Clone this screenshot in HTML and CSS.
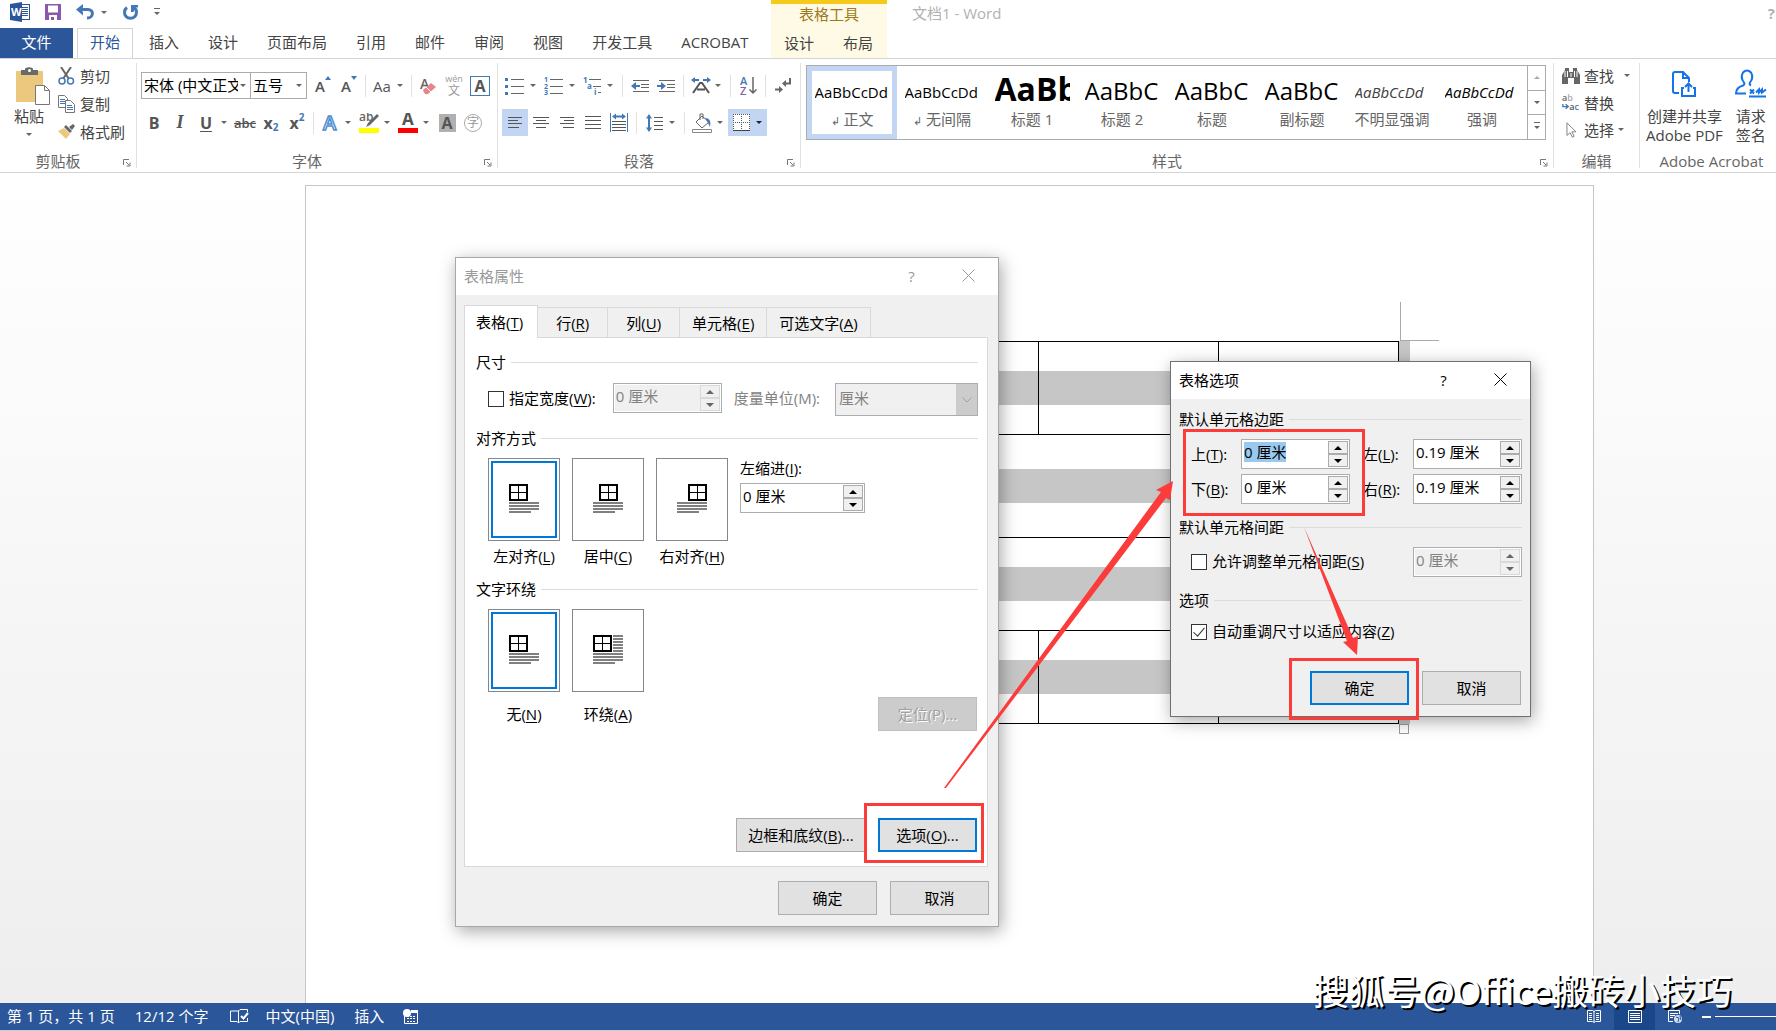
FILE: index.html
```html
<!DOCTYPE html>
<html lang="zh-CN">
<head>
  <meta charset="UTF-8">
  <meta name="viewport" content="width=device-width, initial-scale=1.0">
  <title>文档1 - Word</title>
  <link rel="stylesheet" href="styles.css">
</head>
<body>
  <header class="top">
    <div class="top-left">
      <div class="quick">
        <svg width="20" height="20" viewBox="0 0 20 20"><rect x="10" y="2.500" width="9.500" height="15" fill="#fff" stroke="#2b579a"/><path d="M12 5.500h6M12 7.500h6M12 9.500h6M12 11.500h6M12 13.500h6" stroke="#2b579a"/><path d="M0 2L12 0v20L0 18z" fill="#2b579a"/><text x="1" y="14" font-size="11" font-weight="bold" fill="#fff">W</text></svg>
        <button class="q" aria-label="保存"><svg width="16" height="16" viewBox="0 0 16 16"><path d="M0 0h16v16H0z" fill="#8a58ad"/><path d="M3 1.500h10v7H3zM4 11h8v5H9v-3H6v3H4z" fill="#fff"/></svg></button>
        <button class="q" aria-label="撤消"><svg width="19" height="16" viewBox="0 0 19 16"><path d="M4 5.500h8c6 0 6 8.500-1 8.500" fill="none" stroke="#4478b5" stroke-width="3"/><path d="M0 5.500L7 0v3.500L5 5.500 7 8v3.500z" fill="#4478b5"/></svg><i class="arr"></i></button>
        <button class="q" aria-label="恢复"><svg width="17" height="17" viewBox="0 0 17 17"><path d="M5 3.500A6 6 0 1 0 12 3.500" fill="none" stroke="#4478b5" stroke-width="3"/><path d="M9 1h7v2.500h-3L11.500 8H9z" fill="#4478b5"/></svg></button>
        <button class="q" aria-label="自定义"><svg width="6" height="8" viewBox="0 0 6 8"><path d="M0 .5h6" stroke="#666"/><path d="M0 4h6L3 7z" fill="#666"/></svg></button>
      </div>
      <nav class="tabs">
        <a class="file" href="#">文件</a>
        <a class="tab on" href="#">开始</a>
        <a class="tab" href="#">插入</a>
        <a class="tab" href="#">设计</a>
        <a class="tab" href="#">页面布局</a>
        <a class="tab" href="#">引用</a>
        <a class="tab" href="#">邮件</a>
        <a class="tab" href="#">审阅</a>
        <a class="tab" href="#">视图</a>
        <a class="tab" href="#">开发工具</a>
        <a class="tab" href="#">ACROBAT</a>
      </nav>
    </div>
    <div class="context">
      <div class="context-title">表格工具</div>
      <nav class="tabs"><a class="tab" href="#">设计</a><a class="tab" href="#">布局</a></nav>
    </div>
    <div class="doc-title">文档1 - Word</div>
    <button class="help" aria-label="帮助">?</button>
  </header>

  <div class="ribbon">
    <section class="group clipboard">
      <div class="group-body">
        <button class="paste">
          <svg width="35" height="38" viewBox="0 0 35 38"><path d="M0 4h27v31H0z" fill="#ecc77e"/><path d="M5 3h4V1.500Q13 -1 17 1.500V3h5v5H5z" fill="#6a6a6a"/><circle cx="13.500" cy="3.500" r="1.500" fill="#fff"/><path d="M19.500 18.500h9l5 5v14h-14z" fill="#fff" stroke="#777"/><path d="M28.500 18.500v5h5" fill="none" stroke="#777"/></svg>
          粘贴<i class="arr"></i>
        </button>
        <div class="stack">
          <button><svg width="17" height="18" viewBox="0 0 17 18"><path d="M3 0l8 12M13 0L5 12" stroke="#666" stroke-width="2"/><circle cx="4" cy="14" r="3" fill="#fff" stroke="#4478b5" stroke-width="1.500"/><circle cx="12.500" cy="14" r="3" fill="#fff" stroke="#4478b5" stroke-width="1.500"/></svg>剪切</button>
          <button><svg width="17" height="18" viewBox="0 0 17 18"><path d="M.5 .5h6l3 3v9h-9z" fill="#fff" stroke="#777"/><path d="M2 4.500h5M2 6.500h5M2 8.500h5" stroke="#4478b5"/><path d="M7.500 5.500h5l4 4v8h-9z" fill="#fff" stroke="#777"/><path d="M9 10.500h5M9 12.500h6M9 14.500h6" stroke="#4478b5"/></svg>复制</button>
          <button><svg width="17" height="16" viewBox="0 0 17 16"><path d="M0 7l6-3 6 6-4 5z" fill="#ecc77e"/><path d="M6 3l2-2 6 6-2 2zM11 3l4-3 2 2-3 4z" fill="#666"/></svg>格式刷</button>
        </div>
      </div>
      <div class="group-name">剪贴板<svg class="launch" viewBox="0 0 8 8"><path d="M.5 6V.5H6M3 3l3 3M7 3.500V7H3.500" fill="none" stroke="#777"/></svg></div>
    </section>

    <section class="group font">
      <div class="group-body rows">
        <div class="row">
          <div class="combo face"><input type="text" value="宋体 (中文正文)" aria-label="字体"><i class="arr"></i></div>
          <div class="combo size"><input type="text" value="五号" aria-label="字号"><i class="arr"></i></div>
          <button class="t grow">A<svg width="6" height="4" viewBox="0 0 6 4"><path d="M0 4l3-4 3 4z" fill="#4478b5"/></svg></button>
          <button class="t grow">A<svg width="6" height="4" viewBox="0 0 6 4"><path d="M0 0l3 4 3-4z" fill="#4478b5"/></svg></button>
          <span class="sep"></span>
          <button class="t d">Aa<i class="arr"></i></button>
          <span class="sep"></span>
          <button class="t" aria-label="清除格式"><svg width="17" height="18" viewBox="0 0 17 18"><text x="0" y="12" font-size="14" font-weight="600" fill="#666">A</text><path d="M3 13l8-7 5 4-8 7q-4 1-5-4z" fill="#e8858c"/><path d="M6 10l5 5" stroke="#fff"/></svg></button>
          <button class="t pinyin"><small>wén</small>文</button>
          <button class="t"><span class="boxed">A</span></button>
        </div>
        <div class="row">
          <button class="t b">B</button>
          <button class="t it">I</button>
          <button class="t d b"><u>U</u><i class="arr"></i></button>
          <button class="t strike">abc</button>
          <button class="t b script">x<sub>2</sub></button>
          <button class="t b script">x<sup>2</sup></button>
          <span class="sep"></span>
          <button class="t d" aria-label="文本效果"><svg width="16" height="18" viewBox="0 0 16 18"><text x="1" y="16" font-size="20" fill="#fff" stroke="#4f8fd0" stroke-width="1.500" font-weight="600">A</text></svg><i class="arr"></i></button>
          <button class="t d" aria-label="突出显示"><svg width="20" height="20" viewBox="0 0 20 20"><text x="0" y="8" font-size="12" font-weight="600" fill="#666">ab</text><path d="M18 1l2 2-9 9-4 2 2-4z" fill="#666"/><path d="M0 15h20v5H0z" fill="#ff0"/></svg><i class="arr"></i></button>
          <button class="t d" aria-label="字体颜色"><svg width="20" height="20" viewBox="0 0 20 20"><text x="4" y="12" font-size="17" font-weight="700" fill="#555">A</text><path d="M0 15h20v5H0z" fill="#f00"/></svg><i class="arr"></i></button>
          <button class="t"><span class="shaded">A</span></button>
          <button class="t"><span class="ring">字</span></button>
        </div>
      </div>
      <div class="group-name">字体<svg class="launch" viewBox="0 0 8 8"><path d="M.5 6V.5H6M3 3l3 3M7 3.500V7H3.500" fill="none" stroke="#777"/></svg></div>
    </section>

    <section class="group para">
      <div class="group-body rows">
        <div class="row">
          <button class="t d" aria-label="项目符号"><svg width="19" height="18" viewBox="0 0 19 18"><path d="M0 1h3v3H0zM0 8h3v3H0zM0 15h3v3H0z" fill="#4478b5"/><path d="M6 2.500h13M6 9.500h13M6 16.500h13" stroke="#666"/></svg><i class="arr"></i></button>
          <button class="t d" aria-label="编号"><svg width="19" height="18" viewBox="0 0 19 18"><g font-size="7" font-weight="700" fill="#4478b5"><text x="0" y="5">1</text><text x="0" y="12">2</text><text x="0" y="18">3</text></g><path d="M6 2.500h13M6 9.500h13M6 16.500h13" stroke="#666"/></svg><i class="arr"></i></button>
          <button class="t d" aria-label="多级列表"><svg width="19" height="18" viewBox="0 0 19 18"><g font-size="8" font-weight="700" fill="#4478b5"><text x="0" y="6">1</text><text x="4" y="12">a</text><text x="11" y="18">i</text></g><path d="M6 2.500h12M10 9.500h8M15 15.500h3" stroke="#666"/></svg><i class="arr"></i></button>
          <span class="sep"></span>
          <button class="t" aria-label="减少缩进"><svg width="18" height="12" viewBox="0 0 18 12"><path d="M2 .5h16M10 4.500h8M10 7.500h8M2 11.500h16" stroke="#666"/><path d="M0 6l5-4v3h4v2H5v3z" fill="#4478b5"/></svg></button>
          <button class="t" aria-label="增加缩进"><svg width="18" height="12" viewBox="0 0 18 12"><path d="M2 .5h16M10 4.500h8M10 7.500h8M2 11.500h16" stroke="#666"/><path d="M9 6L4 2v3H0v2h4v3z" fill="#4478b5"/></svg></button>
          <span class="sep"></span>
          <button class="t d" aria-label="中文版式"><svg width="20" height="17" viewBox="0 0 20 17"><path d="M0 3l4-3v2h4v2H4v2zM20 3l-4-3v2h-4v2h4v2z" fill="#4478b5"/><path d="M2 16L9 6h2l7 10M6 12.500h8" fill="none" stroke="#555" stroke-width="2"/></svg><i class="arr"></i></button>
          <span class="sep"></span>
          <button class="t" aria-label="排序"><svg width="17" height="19" viewBox="0 0 17 19"><text x="0" y="9" font-size="11" font-weight="600" fill="#4478b5">A</text><text x="0" y="19" font-size="11" font-weight="600" fill="#8a58ad">Z</text><path d="M13 1v16M9.500 13.500l3.500 3.500 3.500-3.500" fill="none" stroke="#666" stroke-width="1.500"/></svg></button>
          <span class="sep"></span>
          <button class="t" aria-label="显示编辑标记"><svg width="16" height="15" viewBox="0 0 16 15"><path d="M15 0v5.500H9M0 11.500h6" fill="none" stroke="#666" stroke-width="2"/><path d="M7 5.500L11 2v7zM8 11.500L4 8v7z" fill="#666"/></svg></button>
        </div>
        <div class="row">
          <button class="t sel" aria-label="左对齐"><svg width="15" height="12" viewBox="0 0 15 12"><path d="M0 .5h14M0 3.500h10M0 6.500h14M0 10.500h11" stroke="#555"/></svg></button>
          <button class="t" aria-label="居中"><svg width="16" height="12" viewBox="0 0 16 12"><path d="M0 .5h16M3 3.500h10M0 6.500h16M3 10.500h10" stroke="#555"/></svg></button>
          <button class="t" aria-label="右对齐"><svg width="14" height="12" viewBox="0 0 14 12"><path d="M0 .5h14M4 3.500h10M0 6.500h14M3 10.500h11" stroke="#555"/></svg></button>
          <button class="t" aria-label="两端对齐"><svg width="16" height="14" viewBox="0 0 16 14"><path d="M0 .5h16M0 4.500h16M0 8.500h16M0 12.500h16" stroke="#555"/></svg></button>
          <button class="t" aria-label="分散对齐"><svg width="18" height="19" viewBox="0 0 18 19"><path d="M.5 0v19M17.500 0v19" stroke="#4478b5"/><path d="M2 3.500l4-3v2h6v-2l4 3-4 3v-2H6v2z" fill="#4478b5"/><path d="M2 8.500h14M2 11.500h14M2 14.500h14M2 17.500h14" stroke="#555"/></svg></button>
          <span class="sep"></span>
          <button class="t d" aria-label="行距"><svg width="17" height="18" viewBox="0 0 17 18"><path d="M3 0l3 4.500H4v9h2L3 18l-3-4.500h2v-9H0z" fill="#4478b5"/><path d="M8 3.500h9M8 7.500h9M8 11.500h9M8 15.500h9" stroke="#555"/></svg><i class="arr"></i></button>
          <span class="sep"></span>
          <button class="t d" aria-label="底纹"><svg width="20" height="20" viewBox="0 0 20 20"><path d="M10 3l7 6-7 6-6-6zM8 7V1h3v5" fill="none" stroke="#666"/><path d="M13 5q7 0 5 9l-2-4z" fill="#4478b5"/><path d="M.5 16.500h19v3H.5z" fill="#fff" stroke="#888"/></svg><i class="arr"></i></button>
          <button class="t d sel" aria-label="边框"><svg width="17" height="17" viewBox="0 0 17 17"><path d="M0 0h17v17H0z" fill="#fff"/><path d="M0 .5h17M.5 0v17M16.500 0v17M8.500 0v17M0 8.500h17" stroke="#555" stroke-dasharray="1 1"/><path d="M0 16.500h17" stroke="#444"/></svg><i class="arr"></i></button>
        </div>
      </div>
      <div class="group-name">段落<svg class="launch" viewBox="0 0 8 8"><path d="M.5 6V.5H6M3 3l3 3M7 3.500V7H3.500" fill="none" stroke="#777"/></svg></div>
    </section>

    <section class="group styles">
      <div class="gallery">
        <button class="style on"><b>AaBbCcDd</b><span><em>↲</em> 正文</span></button>
        <button class="style"><b>AaBbCcDd</b><span><em>↲</em> 无间隔</span></button>
        <button class="style h1"><b>AaBb</b><span>标题 1</span></button>
        <button class="style h2"><b>AaBbC</b><span>标题 2</span></button>
        <button class="style h2"><b>AaBbC</b><span>标题</span></button>
        <button class="style h2"><b>AaBbC</b><span>副标题</span></button>
        <button class="style italic soft"><b>AaBbCcDd</b><span>不明显强调</span></button>
        <button class="style italic"><b>AaBbCcDd</b><span>强调</span></button>
        <div class="gallery-nav">
          <button class="off" aria-label="上一行"><i class="arr up"></i></button>
          <button aria-label="下一行"><i class="arr"></i></button>
          <button class="more" aria-label="其他"><i class="arr"></i></button>
        </div>
      </div>
      <div class="group-name">样式<svg class="launch" viewBox="0 0 8 8"><path d="M.5 6V.5H6M3 3l3 3M7 3.500V7H3.500" fill="none" stroke="#777"/></svg></div>
    </section>

    <section class="group edit">
      <div class="group-body">
        <div class="stack">
          <button><svg width="18" height="16" viewBox="0 0 18 16"><path d="M0 7L3 2V0h4v4h4V0h4v2l3 5v9h-6v-6H6v6H0z" fill="#666"/><path d="M3 3v6M5.500 3v6M12.500 3v6M15 3v6M9 5v4" stroke="#fff"/></svg>查找<i class="arr far"></i></button>
          <button><svg width="20" height="18" viewBox="0 0 20 18"><text x="0" y="7" font-size="10" font-weight="600" fill="#666">a<tspan fill="#aaa">b</tspan></text><text x="8" y="17" font-size="10" font-weight="600" fill="#555">a<tspan fill="#4478b5">c</tspan></text><path d="M1 10v3h5M4 10.500L7 13l-3 2.500" fill="none" stroke="#4478b5" stroke-width="1.500"/></svg>替换</button>
          <button><svg width="20" height="18" viewBox="0 0 20 18"><path d="M5.500 1v14l3.500-3 2.500 5 2-1-2.500-5h4.500z" fill="#fff" stroke="#777"/></svg>选择<i class="arr"></i></button>
        </div>
      </div>
      <div class="group-name">编辑</div>
    </section>

    <section class="group acrobat">
      <div class="group-body">
        <button><svg width="24" height="26" viewBox="0 0 24 26" fill="none" stroke="#1473e6" stroke-width="2"><path d="M7 22H3q-2 0-2-2V3q0-2 2-2h8l6 6v4M11 1v6h6M12 17h-2v8h13v-8h-2M16.500 21v-8M13 16l3.500-3.500L20 16"/></svg><span>创建并共享</span><span>Adobe PDF</span></button>
        <button><svg width="32" height="29" viewBox="0 0 32 29" fill="none" stroke="#1473e6" stroke-width="2"><path d="M11 24H1q0-6 7-8 2-1 1-3-4-5-1-10 4-4 8 0 3 5-1 10-1 2 1 3M14 27h17M15 20l4 4M19 20l-4 4M21 23l3-3v3l3-3v3l4-3"/></svg><span>请求</span><span>签名</span></button>
      </div>
      <div class="group-name">Adobe Acrobat</div>
    </section>
  </div>

  <main class="work">
    <div class="page">
      <div class="crop"></div>
      <table class="doc">
        <tr><td><div></div></td><td><div></div></td><td><div></div></td><td><div></div></td><td><div></div></td></tr>
        <tr class="tall"><td><div></div></td><td><div></div></td><td colspan="2"><div></div></td><td><div></div></td></tr>
        <tr><td><div></div></td><td><div></div></td><td colspan="2"><div></div></td><td><div></div></td></tr>
        <tr><td><div></div></td><td><div></div></td><td><div></div></td><td><div></div></td><td><div></div></td></tr>
      </table>
      <div class="row-end"><div class="handle"></div></div>
    </div>

    <form class="dialog props">
      <div class="bar"><h2>表格属性</h2><button type="button">?</button><button type="button" aria-label="关闭"><svg width="13" height="13" viewBox="0 0 13 13"><path d="M.5 .5l12 12M12.500 .5l-12 12" stroke="currentColor"/></svg></button></div>
      <div class="sheet-tabs">
        <button type="button" class="on">表格(<u>T</u>)</button>
        <button type="button">行(<u>R</u>)</button>
        <button type="button">列(<u>U</u>)</button>
        <button type="button">单元格(<u>E</u>)</button>
        <button type="button">可选文字(<u>A</u>)</button>
      </div>
      <div class="sheet">
        <div class="legend">尺寸</div>
        <div class="line size-line">
          <input type="checkbox" id="w"><label for="w">指定宽度(<u>W</u>):</label>
          <div class="spin off"><input type="text" value="0 厘米" disabled aria-label="宽度"><div><button type="button" disabled><i></i></button><button type="button" disabled><i></i></button></div></div>
          <label for="unit" class="gray">度量单位(M):</label>
          <div class="pick"><select id="unit" disabled><option>厘米</option></select><svg width="10" height="6" viewBox="0 0 10 6"><path d="M.5 .5L5 5 9.500 .5" fill="none" stroke="#a0a0a0"/></svg></div>
        </div>
        <div class="legend">对齐方式</div>
        <div class="tiles">
          <button type="button" class="on"><span><svg width="30" height="30" viewBox="0 0 30 30"><path d="M1 1h17v15H1z" fill="#fff" stroke="#000" stroke-width="2"/><path d="M9.500 1v15M1 8.500h17" stroke="#000"/><path d="M0 19h30M0 22h30M0 25h30M0 28h22" stroke="#808080" stroke-width="2"/></svg></span>左对齐(<u>L</u>)</button>
          <button type="button"><span><svg width="30" height="30" viewBox="0 0 30 30"><path d="M7 1h17v15H7z" fill="#fff" stroke="#000" stroke-width="2"/><path d="M15.500 1v15M7 8.500h17" stroke="#000"/><path d="M0 19h30M0 22h30M0 25h30M0 28h22" stroke="#808080" stroke-width="2"/></svg></span>居中(<u>C</u>)</button>
          <button type="button"><span><svg width="30" height="30" viewBox="0 0 30 30"><path d="M12 1h17v15H12z" fill="#fff" stroke="#000" stroke-width="2"/><path d="M20.500 1v15M12 8.500h17" stroke="#000"/><path d="M0 19h30M0 22h30M0 25h30M0 28h22" stroke="#808080" stroke-width="2"/></svg></span>右对齐(<u>H</u>)</button>
          <div class="indent">
            <label for="indent">左缩进(<u>I</u>):</label>
            <div class="spin"><input type="text" id="indent" value="0 厘米"><div><button type="button"><i></i></button><button type="button"><i></i></button></div></div>
          </div>
        </div>
        <div class="legend">文字环绕</div>
        <div class="tiles wrap">
          <button type="button" class="on"><span><svg width="30" height="30" viewBox="0 0 30 30"><path d="M1 1h17v15H1z" fill="#fff" stroke="#000" stroke-width="2"/><path d="M9.500 1v15M1 8.500h17" stroke="#000"/><path d="M0 19h30M0 22h30M0 25h30M0 28h22" stroke="#808080" stroke-width="2"/></svg></span>无(<u>N</u>)</button>
          <button type="button"><span><svg width="30" height="30" viewBox="0 0 30 30"><path d="M1 1h17v15H1z" fill="#fff" stroke="#000" stroke-width="2"/><path d="M9.500 1v15M1 8.500h17" stroke="#000"/><path d="M20 1h10M20 4h10M20 7h10M20 10h10M20 13h10M20 16h10M0 19h30M0 22h30M0 25h30M0 28h22" stroke="#808080" stroke-width="2"/></svg></span>环绕(<u>A</u>)</button>
          <input type="button" class="btn" value="定位(P)..." disabled>
        </div>
        <div class="sheet-foot">
          <button type="button" class="btn wide">边框和底纹(<u>B</u>)...</button>
          <button type="button" class="btn focus">选项(<u>O</u>)...</button>
        </div>
      </div>
      <div class="foot"><button type="button" class="btn">确定</button><button type="button" class="btn">取消</button></div>
    </form>

    <form class="dialog opts">
      <div class="bar"><h2>表格选项</h2><button type="button">?</button><button type="button" aria-label="关闭"><svg width="13" height="13" viewBox="0 0 13 13"><path d="M.5 .5l12 12M12.500 .5l-12 12" stroke="currentColor"/></svg></button></div>
      <div class="legend">默认单元格边距</div>
      <div class="margins">
        <label for="mt">上(<u>T</u>):</label>
        <div class="spin"><input type="text" id="mt" value="0 厘米"><div><button type="button"><i></i></button><button type="button"><i></i></button></div></div>
        <label for="ml">左(<u>L</u>):</label>
        <div class="spin"><input type="text" id="ml" value="0.19 厘米"><div><button type="button"><i></i></button><button type="button"><i></i></button></div></div>
        <label for="mb">下(<u>B</u>):</label>
        <div class="spin"><input type="text" id="mb" value="0 厘米"><div><button type="button"><i></i></button><button type="button"><i></i></button></div></div>
        <label for="mr">右(<u>R</u>):</label>
        <div class="spin"><input type="text" id="mr" value="0.19 厘米"><div><button type="button"><i></i></button><button type="button"><i></i></button></div></div>
      </div>
      <div class="legend">默认单元格间距</div>
      <div class="line spacing">
        <input type="checkbox" id="sp"><label for="sp">允许调整单元格间距(<u>S</u>)</label>
        <div class="spin off"><input type="text" value="0 厘米" disabled aria-label="间距"><div><button type="button" disabled><i></i></button><button type="button" disabled><i></i></button></div></div>
      </div>
      <div class="legend">选项</div>
      <div class="line auto"><input type="checkbox" id="fit" checked><label for="fit">自动重调尺寸以适应内容(<u>Z</u>)</label></div>
      <div class="foot"><button type="button" class="btn focus">确定</button><button type="button" class="btn">取消</button></div>
    </form>

    <!-- red boxes and arrows over the dialogs -->
    <svg class="marks" width="600" height="500" viewBox="830 400 600 500">
      <g fill="none" stroke="#fc3b3b" stroke-width="3">
        <rect x="865.500" y="804.500" width="117" height="57"/>
        <rect x="1184.500" y="430.500" width="179" height="84"/>
        <rect x="1290.500" y="659.500" width="127" height="59"/>
      </g>
      <path d="M944 788L1161 492 1156 490 1173 481 1170 500 1166 498 946 788z" fill="#fc3b3b"/>
      <path d="M1304 527L1353 638 1358 636 1357 655 1343 642 1347 641z" fill="#fc3b3b"/>
    </svg>
  </main>

  <footer class="status">
    <span class="pages">第 1 页，共 1 页</span>
    <span class="words">12/12 个字</span>
    <svg width="19" height="15" viewBox="0 0 19 15"><path d="M8.500 2v12M8.500 2H.5v10.500H7l1.500 1.500 1.500-1.500h7.500V9M8.500 2l1.500-1.500h7.500V3" fill="none" stroke="#fff"/><path d="M11 7l2.500 2.500L18 4" fill="none" stroke="#fff" stroke-width="2"/></svg>
    <span class="lang">中文(中国)</span>
    <span class="mode">插入</span>
    <svg width="15" height="15" viewBox="0 0 15 15"><path d="M8 1h7v3H8z" fill="#fff"/><path d="M1.500 7v7.500h13V4" fill="none" stroke="#fff"/><circle cx="4" cy="4" r="4" fill="#fff"/><path d="M4 7.500h9M4 9.500h9M4 12.500h9" stroke="#fff" stroke-dasharray="2 1"/></svg>
    <div class="views">
      <button aria-label="阅读视图"><svg width="14" height="13" viewBox="0 0 14 13"><path d="M.5 .5h5l1.500 1 1.500-1h5v11h-5l-1.500 1-1.500-1h-5zM7 1v11M2 3.500h3M2 5.500h3M2 7.500h3M2 9.500h3M9 3.500h3M9 5.500h3M9 7.500h3M9 9.500h3" fill="none" stroke="#fff"/></svg></button>
      <button class="on" aria-label="页面视图"><svg width="14" height="13" viewBox="0 0 14 13"><path d="M.5 .5h13v12H.5zM2 3.500h10M2 5.500h10M2 7.500h10M2 9.500h10" fill="none" stroke="#fff"/></svg></button>
      <button aria-label="Web 版式"><svg width="15" height="14" viewBox="0 0 15 14"><path d="M5 11.500H.5V.5h11V4M2 3.500h8M2 5.500h5M2 7.500h3" fill="none" stroke="#fff"/><circle cx="10" cy="9" r="4" fill="#cfdcf0"/><path d="M8 7l3 1-1 4M12 6l1 4" stroke="#2b579a" fill="none"/></svg></button>
      <span class="minus"></span><span class="track"></span>
    </div>
    <div class="watermark">搜狐号@Office搬砖小技巧</div>
  </footer>

  <script>
    // the top margin field opens with its value selected
    document.getElementById('mt').select();
  </script>
</body>
</html>
```
FILE: styles.css
```css
* { box-sizing: border-box; }
body {
  margin: 0;
  min-height: 100vh;
  display: flex;
  flex-direction: column;
  background: #fff;
  color: #444;
  font: 15px/20px "Open Sans", "Noto Sans CJK SC", sans-serif;
  overflow: hidden;
}
button, input, select { font: inherit; color: inherit; margin: 0; }
button { background: none; border: 0; padding: 0; white-space: nowrap; }
a { color: inherit; text-decoration: none; }
u { text-underline-offset: 2px; }
svg { flex: none; }
.arr {
  flex: none;
  border: 3px solid transparent;
  border-top-color: #666;
  border-bottom: 0;
}
.arr.up { border-top: 0; border-bottom: 3px solid #aaa; }

/* title bar and tabs */
.top {
  display: flex;
  height: 59px;
  border-bottom: 1px solid #d4d4d4;
}
.top-left { width: 771px; display: flex; flex-direction: column; }
.quick {
  height: 29px;
  padding: 0 10px 4px;
  display: flex;
  align-items: center;
  gap: 15px;
}
.q { display: flex; align-items: center; gap: 6px; }
.tabs { display: flex; height: 30px; }
.tab, .file { height: 29px; line-height: 26px; white-space: nowrap; }
.file { width: 73px; height: 30px; line-height: 28px; background: #2b579a; color: #fff; text-align: center; margin-right: 4px; }
.tab { padding: 0 12px; border: 1px solid transparent; border-bottom: 0; margin-right: 3px; }
.tab.on { height: 30px; color: #2b579a; background: #fff; border-color: #d4d4d4; }
.context { width: 116px; background: #fffae6; border-top: 4px solid #f5ca1b; }
.context-title { height: 25px; line-height: 20px; text-align: center; color: #9b7a1a; }
.context .tabs { height: 29px; }
.doc-title { flex: 1; padding: 3px 25px; color: #b1b1b1; }
.help { color: #b1b1b1; font-weight: bold; align-self: flex-start; padding: 3px 1px; }

/* ribbon */
.ribbon {
  display: flex;
  height: 114px;
  padding-top: 4px;
  border-bottom: 1px solid #d4d4d4;
  overflow: hidden;
}
.group {
  flex: none;
  display: flex;
  flex-direction: column;
  height: 105px;
  border-right: 1px solid #e1e1e1;
}
.group-body { flex: none; height: 88px; display: flex; }
.rows { flex-direction: column; padding: 4px; }
.group-name { position: relative; height: 17px; padding-right: 20px; text-align: center; color: #666; white-space: nowrap; }
.launch { position: absolute; right: 5px; top: 8px; width: 8px; height: 8px; }
.clipboard { width: 137px; }
.font { width: 361px; }
.para { width: 303px; }
.styles { width: 753px; }
.edit { width: 86px; }
.edit .group-name { padding: 0; }
.acrobat { border: 0; }
.paste {
  width: 58px;
  padding-top: 4px;
  display: flex;
  flex-direction: column;
  align-items: center;
  line-height: 22px;
}
.paste svg { margin: 0 0 0 8px; }
.paste .arr { margin-top: 6px; }
.stack { display: flex; flex-direction: column; }
.stack button { height: 28px; display: flex; align-items: center; gap: 5px; padding-bottom: 2px; }
.row { display: flex; align-items: center; height: 37px; }
.combo {
  display: flex;
  align-items: center;
  height: 27px;
  border: 1px solid #ababab;
  padding-right: 4px;
  color: #000;
}
.combo input { width: 100%; min-width: 0; border: 0; padding: 0 2px 2px; outline: 0; background: none; }
.face { width: 110px; }
.size { width: 57px; margin-left: -1px; }
.size + .t { margin-left: 3px; }
.t { width: 26px; height: 27px; display: flex; align-items: center; justify-content: center; color: #555; }
.t.d { width: 39px; position: relative; padding-right: 13px; }
.t.d .arr { position: absolute; right: 5px; top: 12px; }
.t.sel { background: #c2d5f2; }
.t.sel .arr { border-top-color: #222; }
.t.b { font-weight: bold; font-size: 16px; }
.t.it { font: italic bold 18px "Liberation Serif", serif; }
.t.grow { font-weight: 600; align-items: center; }
.t.grow svg { align-self: flex-start; margin-top: 4px; }
.t.strike { font-size: 13px; font-weight: 600; text-decoration: line-through; }
.script sub, .script sup { font-size: 10px; line-height: 10px; color: #4478b5; }
.script sub { align-self: flex-end; margin-bottom: 4px; }
.script sup { align-self: flex-start; margin-top: 3px; }
.pinyin { flex-direction: column; font-size: 12px; line-height: 14px; color: #999; }
.pinyin small { font-size: 9px; line-height: 10px; }
.boxed, .shaded, .ring { width: 20px; height: 20px; line-height: 18px; font-weight: bold; font-size: 16px; }
.boxed { border: 1px solid #4478b5; }
.shaded { width: 17px; height: 18px; background: #b0b0b0; }
.ring { border: 1px solid #b0a8ac; border-radius: 50%; width: 18px; height: 18px; line-height: 16px; font-size: 12px; font-weight: normal; color: #999; }
.sep { width: 1px; height: 22px; background: #e1e1e1; margin: 0 3px; }
.para .sep { margin: 0 4px; }

.gallery { flex: none; display: flex; margin: 2px 7px 11px 5px; height: 75px; border: 1px solid #ababab; }
.style {
  flex: none;
  width: 90px;
  display: flex;
  flex-direction: column;
  align-items: center;
  padding: 7px 0 0;
  color: #666;
}
.style.on { border: 5px solid #c2d5f2; padding: 2px 0 0; }
.style b { flex: none; width: 75px; height: 36px; line-height: 38px; overflow: hidden; font-weight: normal; color: #000; text-align: left; }
.style em { font-size: 11px; font-style: normal; }
.style.h1 b { font-size: 32px; font-weight: bold; line-height: 32px; }
.style.h2 b { font-size: 24px; line-height: 36px; }
.style.italic b { font-style: italic; }
.style.soft b { color: #404040; }
.gallery-nav { flex: 1; display: flex; flex-direction: column; border-left: 1px solid #ababab; }
.gallery-nav button { flex: 1; display: flex; justify-content: center; align-items: center; border-bottom: 1px solid #ababab; }
.gallery-nav button:last-child { border: 0; }
.more .arr { position: relative; }
.more .arr::before { content: ""; position: absolute; left: -3px; top: -7px; width: 6px; height: 1px; background: #666; }

.edit .stack { padding: 0 8px; }
.edit .stack button { height: 27px; gap: 4px; }
.edit .stack svg { width: 18px; }
.edit .far { margin-left: 6px; }
.acrobat .group-body { gap: 12px; padding: 6px 6px 0; }
.acrobat button { display: flex; flex-direction: column; align-items: center; line-height: 19px; }
.acrobat svg { height: 30px; margin-bottom: 8px; }
.acrobat .group-name { padding: 0 0 0 10px; }

/* document */
.work { flex: 1; position: relative; display: flex; background: linear-gradient(#fff, #eee); overflow: hidden; }
.page {
  flex: 1;
  position: relative;
  display: flex;
  align-items: flex-start;
  margin: 12px 182px 0 305px;
  padding: 155px 0 0 193px;
  background: #fff;
  border: 1px solid #c6c6c6;
  border-bottom: 0;
}
.doc { width: 900px; table-layout: fixed; border-collapse: collapse; }
.doc tr { height: 93px; }
.doc .tall { height: 103px; }
.doc td { border: 1px solid #000; padding: 0; }
.doc td div { height: 34px; background: #c6c6c6; }
.row-end { width: 11px; height: 383px; background: #c6c6c6; position: relative; }
.handle { position: absolute; top: 383px; left: 0; width: 10px; height: 10px; border: 1px solid #999; background: #fff; }
.crop { position: absolute; left: 1094px; top: 116px; width: 39px; height: 39px; border: solid #aaa; border-width: 0 0 1px 1px; }

/* dialogs */
.dialog {
  position: absolute;
  background: #f0f0f0;
  color: #000;
  box-shadow: 2px 4px 16px rgba(0,0,0,0.35);
}
.props { left: 455px; top: 84px; width: 544px; border: 1px solid #a8a8a8; }
.opts { left: 1170px; top: 188px; width: 361px; border: 1px solid #707070; }
.bar { height: 37px; display: flex; align-items: center; background: #fff; padding: 0 1px 2px 8px; }
.bar h2 { flex: 1; margin: 0; font-size: 15px; font-weight: normal; }
.bar button { width: 57px; display: flex; justify-content: center; }
.props .bar { color: #999; }
.legend { display: flex; align-items: center; gap: 5px; height: 20px; white-space: nowrap; }
.legend::after { content: ""; flex: 1; height: 1px; background: #dcdcdc; }
.line { display: flex; align-items: center; white-space: nowrap; }
.line label { padding-bottom: 2px; }
.gray { color: #838383; }
input[type=checkbox] {
  appearance: none;
  width: 16px;
  height: 16px;
  border: 1px solid #333;
  background: #fff;
  margin-right: 5px;
  display: flex;
  justify-content: center;
}
input[type=checkbox]:checked::after {
  content: "";
  width: 5px;
  height: 10px;
  border: solid #333;
  border-width: 0 1px 1px 0;
  transform: rotate(40deg);
}
.spin { display: flex; width: 109px; height: 30px; border: 1px solid #abadb3; background: #fff; padding: 1px; }
.spin input { flex: 1; min-width: 0; border: 0; outline: 0; padding: 0 1px 5px; background: none; }
.spin input::selection { background: #99c9ef; color: #000; }
.spin > div { width: 20px; display: flex; flex-direction: column; background: #f0f0f0; }
.spin button { flex: 1; border: 1px solid #acacac; background: #f0f0f0; display: flex; align-items: center; justify-content: center; }
.spin i { border: 4px solid transparent; border-top: 0; border-bottom-color: #000; }
.spin button + button i { border-top: 4px solid #000; border-bottom: 0; }
.spin.off input { background: #f0f0f0; color: #838383; }
.spin.off button { border-color: #d9d9d9; }
.spin.off i { border-bottom-color: #666; }
.spin.off button + button i { border-top-color: #666; }
.btn {
  width: 99px;
  height: 34px;
  border: 1px solid #adadad;
  background: #e1e1e1;
  text-align: center;
}
.btn.focus { border: 2px solid #0078d7; }
.btn.wide { width: 130px; }
.btn:disabled { background: #ccc; border-color: #bfbfbf; color: #a0a0a0; text-shadow: 1px 1px #fff; padding: 0; }
.foot { display: flex; justify-content: flex-end; gap: 13px; }

.sheet-tabs { display: flex; align-items: flex-end; margin: 10px 8px 0; height: 32px; }
.sheet-tabs button { height: 30px; border: 1px solid #d9d9d9; border-width: 1px 1px 0 0; padding: 0 18px; }
.sheet-tabs button:nth-child(n+4) { padding: 0 12px; }
.sheet-tabs .on { position: relative; height: 33px; margin-bottom: -1px; background: #fff; border-width: 1px 1px 0 1px; padding: 0 14px 0 11px; }
.sheet { margin: 0 10px 0 8px; border: 1px solid #d9d9d9; background: #fff; padding: 14px 9px 14px 11px; }
.size-line { height: 34px; margin: 10px 0 12px; padding-left: 12px; }
.size-line .spin { margin: 0 12px 2px auto; }
.pick { position: relative; width: 143px; margin-left: 15px; }
.pick select { appearance: none; width: 100%; height: 33px; border: 1px solid #abadb3; border-radius: 0; background: linear-gradient(to left, #ccc 21px, #f0f0f0 21px); padding: 0 3px 2px; color: #838383; opacity: 1; }
.pick svg { position: absolute; right: 6px; top: 14px; }
.tiles { display: flex; gap: 12px; margin: 10px 0 13px; padding-left: 12px; }
.tiles > button { width: 72px; display: flex; flex-wrap: wrap; justify-content: center; align-content: flex-start; row-gap: 5px; }
.tiles span { width: 72px; height: 83px; border: 1px solid #828790; padding: 25px 20px 0; background: #fff; }
.tiles .on span { outline: 2px solid #0078d7; outline-offset: -5px; }
.indent .spin { width: 125px; margin-top: 5px; }
.wrap { height: 122px; margin-bottom: 87px; }
.wrap > button { row-gap: 12px; }
.wrap .btn { margin: auto 1px 0 auto; }
.sheet-foot { display: flex; justify-content: flex-end; gap: 12px; padding-right: 1px; }
.props .foot { padding: 14px 9px 11px; }

.opts .legend { margin: 10px 8px 0; }
.margins {
  display: grid;
  grid-template-columns: 50px 109px 63px 109px;
  row-gap: 5px;
  align-items: center;
  margin: 10px 8px 13px 20px;
}
.margins label:nth-of-type(even) { padding-left: 13px; }
.opts .line { padding: 0 8px 0 20px; }
.spacing { margin: 10px 0 13px; }
.spacing .spin { margin-left: auto; }
.margins + .legend, .opts .spacing + .legend { margin-top: 0; }
.auto { margin: 12px 0 29px; height: 20px; }
.opts .foot { padding: 0 9px 11px; }
.marks { position: absolute; left: 830px; top: 227px; pointer-events: none; }

/* status bar */
.status {
  position: relative;
  display: flex;
  align-items: center;
  height: 28px;
  padding-left: 7px;
  background: #2b579a;
  border-bottom: 1px solid #ccc;
  color: #fff;
  white-space: nowrap;
}
.status > span { padding-bottom: 2px; }
.words { margin: 0 22px 0 20px; }
.lang { margin: 0 20px 0 16px; }
.mode { margin-right: 19px; }
.views { margin-left: auto; display: flex; align-items: center; }
.views button { width: 41px; height: 27px; display: flex; align-items: center; justify-content: center; }
.views .on { background: #19478a; }
.minus { width: 9px; height: 2px; background: #fff; margin: 0 4px 0 6px; }
.track { width: 61px; height: 1px; background: #fff; }
.watermark {
  position: absolute;
  right: 44px;
  bottom: 14px;
  font: 36px/54px "Noto Sans CJK SC", sans-serif;
  text-shadow: 2px 2px #000;
}
```
